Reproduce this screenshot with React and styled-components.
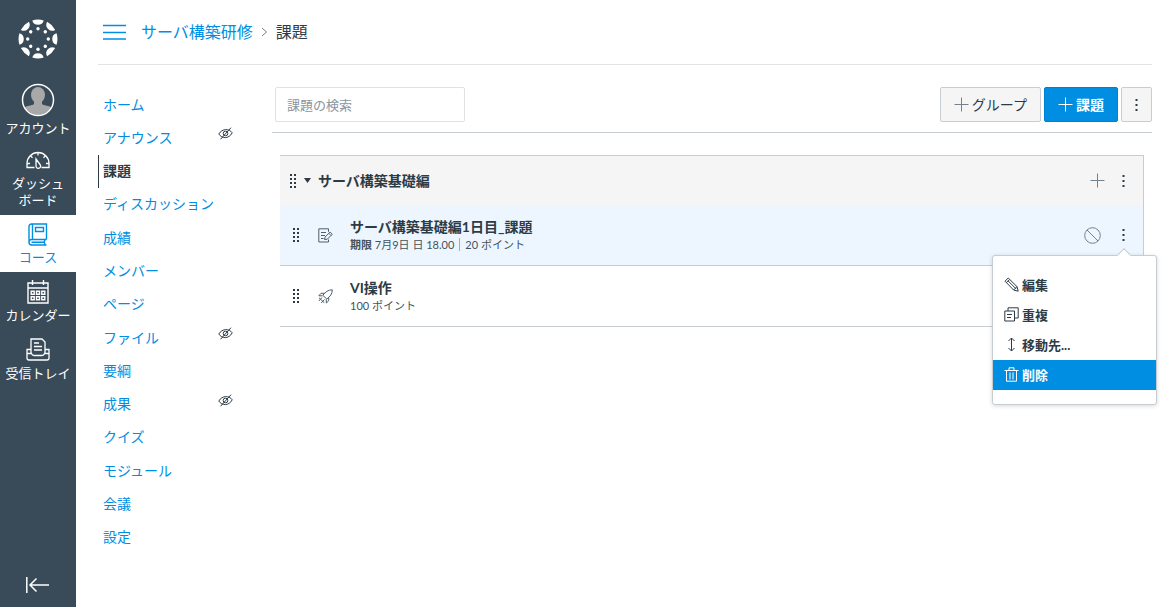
import React, { useState } from 'react';
import styled, { createGlobalStyle, css } from 'styled-components';

const GlobalStyle = createGlobalStyle`
  *, *::before, *::after {
    box-sizing: border-box;
  }
  body {
    margin: 0;
    background: #fff;
    color: #2d3b45;
    font-family: Lato, 'Noto Sans CJK JP', sans-serif;
    font-size: 14px;
    line-height: 20px;
  }
  button, input {
    font: inherit;
    color: inherit;
    margin: 0;
  }
  ul {
    list-style: none;
    margin: 0;
    padding: 0;
  }
  a {
    text-decoration: none;
  }
  svg {
    display: block;
    flex: none;
  }
`;

const Page = styled.div`
  display: flex;
  min-height: 100vh;
`;

/* global navigation */
const Sidebar = styled.nav`
  flex: none;
  width: 76px;
  display: flex;
  flex-direction: column;
  background: #394b58;
`;
const LogoLink = styled.a`
  display: flex;
  justify-content: center;
  padding: 19px 0 16px;
`;
const SidebarLink = styled.a`
  display: flex;
  flex-direction: column;
  align-items: center;
  gap: ${({ $gap }) => $gap || 3}px;
  padding: 8px 0 6px;
  font-size: 13px;
  line-height: 17px;
  text-align: center;
  white-space: pre-line;
  color: ${({ $active }) => ($active ? '#008ee2' : '#fff')};
  background: ${({ $active }) => ($active ? '#fff' : 'transparent')};
`;
const CollapseButton = styled.button`
  display: flex;
  justify-content: center;
  margin-top: auto;
  padding: 12px 0 13px;
  border: 0;
  background: none;
  color: #fff;
`;

/* page frame */
const Main = styled.main`
  flex: 1;
  min-width: 0;
  padding: 0 22px;
`;
const Header = styled.header`
  display: flex;
  align-items: center;
  height: 65px;
  border-bottom: 1px solid #e1e3e4;
`;
const MenuToggle = styled.button`
  padding: 0 5px;
  margin-right: 10px;
  border: 0;
  background: none;
  color: #008ee2;
`;
const Breadcrumbs = styled.div`
  display: flex;
  align-items: center;
  gap: 8px;
  font-size: 16px;
  line-height: 24px;

  a {
    color: #008ee2;
  }
`;
const Columns = styled.div`
  display: flex;
`;
const CourseNav = styled.ul`
  flex: none;
  width: 174px;
  height: 466px;
  margin-top: 23px;
  display: grid;
  grid-auto-rows: 1fr;
`;
const CourseNavItem = styled.li`
  display: flex;
  justify-content: space-between;
  align-items: center;
  padding: 0 39px 0 4px;
  border-left: 1px solid ${({ $active }) => ($active ? '#2d3b45' : 'transparent')};

  a {
    color: ${({ $active }) => ($active ? '#2d3b45' : '#008ee2')};
    font-weight: ${({ $active }) => ($active ? 700 : 400)};
  }
  svg {
    align-self: flex-start;
    margin-top: 6px;
  }
`;
const Content = styled.section`
  flex: 1;
  min-width: 0;
`;

/* toolbar */
const Toolbar = styled.div`
  display: flex;
  gap: 3px;
  padding: 22px 0 10px 3px;
  border-bottom: 1px solid #c7cdd1;
`;
const SearchInput = styled.input`
  width: 190px;
  height: 35px;
  margin-right: auto;
  padding: 0 11px;
  border: 1px solid #dfe3e6;
  border-radius: 2px;
  font-size: 13px;

  &::placeholder {
    color: #8b969e;
    opacity: 1;
  }
`;
const Button = styled.button`
  display: flex;
  align-items: center;
  justify-content: center;
  gap: 3px;
  height: 35px;
  padding: 0 ${({ $iconOnly }) => ($iconOnly ? 10 : 13)}px;
  border: 1px solid #c7cdd1;
  border-radius: 2px;
  background: #f5f5f5;

  ${({ $primary }) =>
    $primary &&
    css`
      border-color: #0081cf;
      background: #008ee2;
      color: #fff;
      font-weight: 700;
    `}
`;

/* assignment group */
const Group = styled.section`
  margin: 22px 8px 0;
  border-top: 1px solid #c7cdd1;
  border-right: 1px solid #c7cdd1;
`;
const GroupHeader = styled.div`
  display: flex;
  align-items: center;
  height: 49px;
  padding: 0 15px 0 10px;
  background: #f5f5f5;
`;
const GroupToggle = styled.button`
  display: flex;
  align-items: center;
  gap: 7px;
  margin-left: 8px;
  padding: 0;
  border: 0;
  background: none;
  font-weight: 700;
`;
const Actions = styled.div`
  position: relative;
  display: flex;
  align-items: center;
  gap: ${({ $wide }) => ($wide ? 18 : 14)}px;
  margin-left: auto;
`;
const IconButton = styled.button`
  padding: 0;
  border: 0;
  background: none;
`;
const Assignment = styled.li`
  display: flex;
  align-items: center;
  height: 61px;
  padding: 0 15px 0 13px;
  border-bottom: 1px solid #c7cdd1;
  background: ${({ $selected }) => ($selected ? '#edf6ff' : '#fff')};
`;
const TypeIcon = styled.span`
  margin: 0 17px 0 19px;
  color: #4f5f6b;
`;
const AssignmentTitle = styled.a`
  display: block;
  font-weight: 700;
  color: #2d3b45;
`;
const AssignmentDetails = styled.div`
  font-size: 11px;
  line-height: 16px;
  color: #45525b;
`;
const Due = styled.span`
  margin-right: 5px;
  padding-right: 5px;
  border-right: 1px solid #a5adb3;
`;

/* assignment menu */
const Menu = styled.ul`
  position: absolute;
  z-index: 1;
  top: 28px;
  right: -29px;
  width: 165px;
  padding: 14px 0;
  border: 1px solid #c7cdd1;
  border-radius: 3px;
  background: #fff;
  box-shadow: 0 1px 4px rgba(45, 59, 69, 0.2);

  &::before {
    content: '';
    position: absolute;
    top: -6px;
    right: 27px;
    width: 10px;
    height: 10px;
    border: solid #c7cdd1;
    border-width: 1px 0 0 1px;
    background: #fff;
    transform: rotate(45deg);
  }
`;
const MenuItem = styled.button`
  display: flex;
  align-items: center;
  gap: 3px;
  width: 100%;
  height: 30px;
  padding: 0 11px;
  border: 0;
  background: ${({ $active }) => ($active ? '#008ee2' : '#fff')};
  color: ${({ $active }) => ($active ? '#fff' : '#2d3b45')};
  font-size: 13px;
  font-weight: 700;
`;

const Svg = ({ w, h, children, sw = 1 }) => (
  <svg
    width={w}
    height={h}
    viewBox={`0 0 ${w} ${h}`}
    fill="none"
    stroke="currentColor"
    strokeWidth={sw}
    aria-hidden="true"
  >
    {children}
  </svg>
);

const Logo = () => (
  <svg width="40" height="40" viewBox="-20 -20 40 40" fill="#fff" aria-hidden="true">
    {[0, 45, 90, 135, 180, 225, 270, 315].map((angle) => (
      <g key={angle} transform={`rotate(${angle})`}>
        <path d="M-5.7 -18.6A19.5 19.5 0 0 1 5.7 -18.6A5.9 5.9 0 0 1 -5.7 -18.6Z" />
        <circle cy="-10.3" r="1.7" />
      </g>
    ))}
  </svg>
);
const AvatarIcon = () => (
  <svg width="34" height="34" viewBox="0 0 34 34" aria-hidden="true">
    <clipPath id="avatar">
      <circle cx="17" cy="17" r="15" />
    </clipPath>
    <g clipPath="url(#avatar)" fill="#a8a8a8">
      <ellipse cx="17" cy="12" rx="7" ry="8" />
      <path d="M13 17h8v4c1 1.500 8 1.500 10 4v9H3v-9c2-2.500 9-2.500 10-4z" />
    </g>
    <circle cx="17" cy="17" r="15.500" fill="none" stroke="#fff" strokeWidth="1.500" />
  </svg>
);
const DashboardIcon = () => (
  <Svg w={24} h={18} sw={1.3}>
    <path d="M8.500 16.500H1V12.500a11 11 0 0 1 22 0v4h-7.500" />
    <path d="M12 1.500v3M4.500 4.800l2 2M19.500 4.800l-2 2M1 12.500h3M20 12.500h3" />
    <path d="M10 8l4 5.500a2.300 2.300 0 1 1-4 1.500z" />
  </Svg>
);
const CourseIcon = () => (
  <Svg w={20} h={23} sw={1.4}>
    <path d="M18.500 16.500V1H3.500C2 1 1 2 1 3.500V19c0 1.700 1 3 2.500 3h15M18.500 16.500H3.500c-3.300 0-3.300 5.300 0 5.300M4.500 1v15.500M17 16.500c-.8 1.500-.8 3.700 0 5.300M3.500 19.200h13" />
    <path d="M7.500 4.500h8v4h-8z" />
  </Svg>
);
const CalendarIcon = () => (
  <Svg w={22} h={24} sw={1.4}>
    <path d="M1 3h20v20H1zM1 8h20M5.500 0v5M16.500 0v5" />
    <path d="M4.200 11.200h3v3h-3zM9.500 11.200h3v3h-3zM14.800 11.200h3v3h-3zM4.200 16.700h3v3h-3zM9.500 16.700h3v3h-3zM14.800 16.700h3v3h-3z" />
  </Svg>
);
const InboxIcon = () => (
  <Svg w={24} h={23} sw={1.3}>
    <path d="M5 15.500V1h11l3 3v11.500M8 5h5M8 8.500h8M8 12h8" />
    <path d="M5 11.500H1V20c0 1.300.7 2 2 2h18c1.300 0 2-.7 2-2v-8.500h-4M1 15.500h4.500c.5 1.600 1.300 2 2.500 2h8c1.200 0 2-.4 2.500-2H23" />
  </Svg>
);
const CollapseIcon = () => (
  <Svg w={24} h={18} sw={1.5}>
    <path d="M.8 1v16M3.500 9H23M10.500 2.500L4 9l6.500 6.500" />
  </Svg>
);
const HamburgerIcon = () => (
  <Svg w={23} h={16} sw={1.4}>
    <path d="M0 1.500h23M0 8.500h23M0 15h23" />
  </Svg>
);
const ChevronIcon = () => (
  <Svg w={7} h={10}>
    <path d="M1 1l4.500 4L1 9" stroke="#73818c" />
  </Svg>
);
const HiddenIcon = () => (
  <Svg w={15} h={13}>
    <path d="M.8 7C4 1.500 11 1.200 14.200 5.800 11 12 4 12 .8 7zM2.500 12.300L13 .7" />
    <circle cx="7.500" cy="6.500" r="2.300" />
  </Svg>
);
const PlusIcon = ({ color = 'currentColor' }) => (
  <Svg w={15} h={15}>
    <path d="M.5 7.500h14M7.500 .5v14" stroke={color} />
  </Svg>
);
const KebabIcon = () => (
  <svg width="9" height="14" viewBox="0 0 9 14" fill="#2d3b45" aria-hidden="true">
    <path d="M3.500 1h2v2h-2zM3.500 6h2v2h-2zM3.500 11h2v2h-2z" />
  </svg>
);
const DragIcon = () => (
  <svg width="6" height="14" viewBox="0 0 6 14" fill="#2d3b45" aria-hidden="true">
    {[0, 4, 8, 12].map((y) => (
      <path key={y} d={`M0 ${y}h2v2h-2zM4 ${y}h2v2h-2z`} />
    ))}
  </svg>
);
const CaretIcon = () => (
  <svg width="7" height="5" viewBox="0 0 7 5" fill="#2d3b45" aria-hidden="true">
    <path d="M0 0h7L3.500 5z" />
  </svg>
);
const AssignmentIcon = () => (
  <Svg w={15} h={15}>
    <path d="M10.500 11.500v2.500H.8V.8h9.700v3M3 4.500h5M3 7.500h4M3 10.500h2.500" />
    <path d="M6.500 11.500l.6-2.500 5-5 2.200 2.200-5 5zM10.800 5.300l2.200 2.200" />
  </Svg>
);
const QuizIcon = () => (
  <Svg w={15} h={15}>
    <path d="M14.300.8C10 .8 7.500 3 4.800 6.300L8.800 10c3.300-2.500 5.500-5 5.500-9.200zM6.800 4.300H3L.8 6.800h3.700M10.700 8.500v3.300L8.300 14v-3.700M4 8.500L.8 12M6.500 10.500L3.200 14M1 8.800l5.300 5" />
  </Svg>
);
const UnpublishedIcon = () => (
  <Svg w={17} h={17}>
    <circle cx="8.500" cy="8.500" r="7.800" stroke="#73818c" />
    <path d="M3 3l11 11" stroke="#73818c" />
  </Svg>
);
const EditIcon = () => (
  <Svg w={15} h={15}>
    <path d="M1 4.200L4.200 1 13 9.600l1.200 4.600L9.600 13zM2.500 5.600l3-3M4 3.800l8 8M9.600 13l3.400-3.400" />
  </Svg>
);
const DuplicateIcon = () => (
  <Svg w={15} h={15}>
    <path d="M.8 4h9.700v10H.8zM4 4V.8h10.200V11H10.500M3 7.500h5M3 10.500h4" />
  </Svg>
);
const MoveIcon = () => (
  <Svg w={15} h={15}>
    <path d="M7.500 1v13M4.500 4l3-3 3 3M4.500 11l3 3 3-3" />
  </Svg>
);
const TrashIcon = () => (
  <Svg w={15} h={15}>
    <path d="M.5 3.500h14M5 3.500V.8h5v2.700M2.500 3.500v10.700h10V3.500M6 5.500v7M9 5.500v7" />
  </Svg>
);

const sidebarLinks = [
  { label: 'アカウント', icon: <AvatarIcon /> },
  { label: 'ダッシュ\nボード', icon: <DashboardIcon />, gap: 6 },
  { label: 'コース', icon: <CourseIcon />, active: true },
  { label: 'カレンダー', icon: <CalendarIcon /> },
  { label: '受信トレイ', icon: <InboxIcon />, gap: 4 },
];

const courseLinks = [
  { label: 'ホーム' },
  { label: 'アナウンス', hidden: true },
  { label: '課題', active: true },
  { label: 'ディスカッション' },
  { label: '成績' },
  { label: 'メンバー' },
  { label: 'ページ' },
  { label: 'ファイル', hidden: true },
  { label: '要綱' },
  { label: '成果', hidden: true },
  { label: 'クイズ' },
  { label: 'モジュール' },
  { label: '会議' },
  { label: '設定' },
];

const menuItems = [
  { label: '編集', icon: <EditIcon /> },
  { label: '重複', icon: <DuplicateIcon /> },
  { label: '移動先...', icon: <MoveIcon /> },
  { label: '削除', icon: <TrashIcon />, active: true },
];

const AssignmentMenu = () => (
  <Menu>
    {menuItems.map(({ label, icon, active }) => (
      <li key={label}>
        <MenuItem type="button" $active={active}>
          {icon}
          {label}
        </MenuItem>
      </li>
    ))}
  </Menu>
);

export default function App() {
  const [menuOpen, setMenuOpen] = useState(true);
  const [search, setSearch] = useState('');

  return (
    <>
      <GlobalStyle />
      <Page>
        <Sidebar>
          <LogoLink href="#" aria-label="Canvas">
            <Logo />
          </LogoLink>
          {sidebarLinks.map(({ label, icon, active, gap }) => (
            <SidebarLink key={label} href="#" $active={active} $gap={gap}>
              {icon}
              {label}
            </SidebarLink>
          ))}
          <CollapseButton type="button" aria-label="ナビゲーションを閉じる">
            <CollapseIcon />
          </CollapseButton>
        </Sidebar>
        <Main>
          <Header>
            <MenuToggle type="button" aria-label="コースメニュー">
              <HamburgerIcon />
            </MenuToggle>
            <Breadcrumbs>
              <a href="#">サーバ構築研修</a>
              <ChevronIcon />
              <span>課題</span>
            </Breadcrumbs>
          </Header>
          <Columns>
            <CourseNav>
              {courseLinks.map(({ label, active, hidden }) => (
                <CourseNavItem key={label} $active={active}>
                  <a href="#">{label}</a>
                  {hidden && <HiddenIcon />}
                </CourseNavItem>
              ))}
            </CourseNav>
            <Content>
              <Toolbar>
                <SearchInput
                  type="text"
                  placeholder="課題の検索"
                  aria-label="課題の検索"
                  value={search}
                  onChange={(e) => setSearch(e.target.value)}
                />
                <Button type="button">
                  <PlusIcon color="#73818c" />
                  グループ
                </Button>
                <Button type="button" $primary>
                  <PlusIcon />
                  課題
                </Button>
                <Button type="button" aria-label="設定" $iconOnly>
                  <KebabIcon />
                </Button>
              </Toolbar>
              <Group>
                <GroupHeader>
                  <DragIcon />
                  <GroupToggle type="button">
                    <CaretIcon />
                    サーバ構築基礎編
                  </GroupToggle>
                  <Actions>
                    <IconButton type="button" aria-label="課題を追加">
                      <PlusIcon color="#73818c" />
                    </IconButton>
                    <IconButton type="button" aria-label="グループの設定">
                      <KebabIcon />
                    </IconButton>
                  </Actions>
                </GroupHeader>
                <ul>
                  <Assignment $selected>
                    <DragIcon />
                    <TypeIcon>
                      <AssignmentIcon />
                    </TypeIcon>
                    <div>
                      <AssignmentTitle href="#">サーバ構築基礎編1日目_課題</AssignmentTitle>
                      <AssignmentDetails>
                        <Due>
                          <b>期限</b> 7月9日 日 18.00
                        </Due>
                        20 ポイント
                      </AssignmentDetails>
                    </div>
                    <Actions $wide>
                      <IconButton type="button" aria-label="未公開">
                        <UnpublishedIcon />
                      </IconButton>
                      <IconButton
                        type="button"
                        aria-label="課題の設定"
                        aria-expanded={menuOpen}
                        onClick={() => setMenuOpen(!menuOpen)}
                      >
                        <KebabIcon />
                      </IconButton>
                      {menuOpen && <AssignmentMenu />}
                    </Actions>
                  </Assignment>
                  <Assignment>
                    <DragIcon />
                    <TypeIcon>
                      <QuizIcon />
                    </TypeIcon>
                    <div>
                      <AssignmentTitle href="#">VI操作</AssignmentTitle>
                      <AssignmentDetails>100 ポイント</AssignmentDetails>
                    </div>
                  </Assignment>
                </ul>
              </Group>
            </Content>
          </Columns>
        </Main>
      </Page>
    </>
  );
}
